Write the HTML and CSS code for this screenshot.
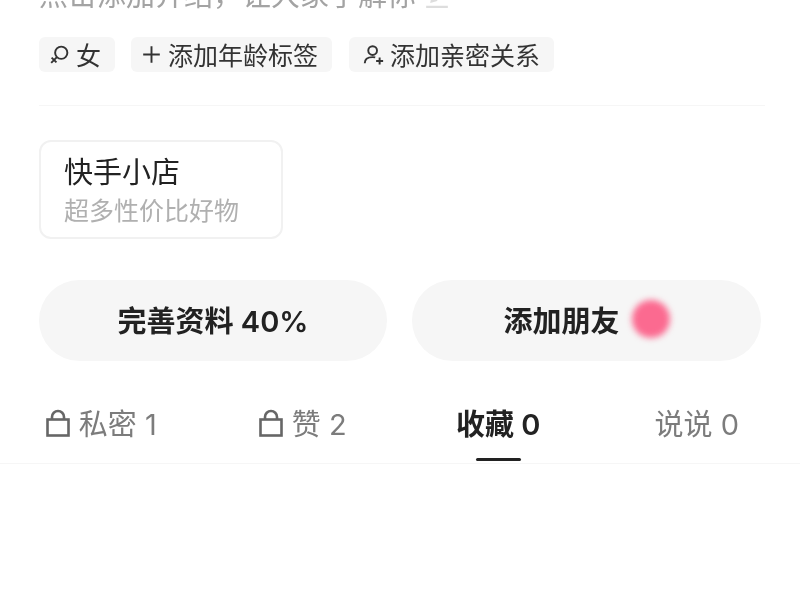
FILE: index.html
```html
<!DOCTYPE html>
<html lang="zh">
<head>
<meta charset="utf-8">
<title>个人主页</title>
<link rel="stylesheet" href="styles.css">
</head>
<body>
<main class="page">
  <section class="profile">
    <p class="intro">点击添加介绍，让大家了解你 <svg class="edit" viewBox="0 0 24 24"><path d="M2 22h20M7 17l1-4L17 4l3 3-9 9z"/></svg></p>
    <div class="tags">
      <span class="tag"><svg class="tag-icon" viewBox="0 0 24 24"><circle cx="14" cy="10" r="7"/><path d="M9 15 2.500 21.500M3 15.500l5.500 5.500"/></svg>女</span>
      <span class="tag"><svg class="tag-icon" viewBox="0 0 24 24"><path d="M12 2.500v19M2.500 12h19"/></svg>添加年龄标签</span>
      <span class="tag tag-wide"><svg class="tag-icon" viewBox="0 0 24 24"><circle cx="11" cy="7.500" r="5"/><path d="M2 22c0-4.500 3.500-7 9-7 1 0 2 .1 3 .3M15 19.500h8M19 15.500v8"/></svg>添加亲密关系</span>
    </div>
  </section>
  <div class="shop">
    <div class="shop-name">快手小店</div>
    <div class="shop-sub">超多性价比好物</div>
  </div>
  <div class="actions">
    <button class="action action-first">完善资料 40%</button>
    <button class="action">添加朋友<span class="dot"></span></button>
  </div>
  <nav class="tabs">
    <div class="tab"><svg class="lock" viewBox="0 0 24 28"><rect x="1.500" y="10.500" width="21" height="16"/><path d="M6 10.500V8a6 6 0 0 1 12 0v2.500"/></svg>私密 1</div>
    <div class="tab tab-shift"><svg class="lock" viewBox="0 0 24 28"><rect x="1.500" y="10.500" width="21" height="16"/><path d="M6 10.500V8a6 6 0 0 1 12 0v2.500"/></svg>赞 2</div>
    <div class="tab active">收藏 0</div>
    <div class="tab">说说 0</div>
  </nav>
</main>
</body>
</html>
```
FILE: styles.css
```css
* { box-sizing: border-box; }
html, body { margin: 0; height: 100%; background: #fff; overflow: hidden; }
body { font-family: Inter, "Noto Sans CJK SC", sans-serif; }
.page { height: 600px; filter: blur(0.7px); overflow: hidden; }
.profile { margin: 0 35px 0 39px; padding-bottom: 33px; border-bottom: 1px solid #f6f6f6; }
.intro { margin: -23px 0 0; height: 45px; font-size: 29px; line-height: 37px; color: #a3a3a3; white-space: nowrap; }
.edit { width: 26px; height: 26px; fill: none; stroke: #ddd; stroke-width: 2; vertical-align: -3px; }
.tags { display: flex; gap: 16px; margin-top: 15px; }
.tag { display: flex; align-items: center; height: 35px; padding: 0 14px 2px 10px; gap: 6px; background: #f6f6f6; border-radius: 6px; font-size: 25px; color: #333; white-space: nowrap; }
.tag-wide { margin-left: 1px; padding-left: 14px; }
.tag-icon { width: 21px; height: 21px; fill: none; stroke: #333; stroke-width: 2.200; margin-top: 2px; }
.shop { width: 244px; height: 99px; margin: 34px 0 0 39px; padding: 12px 23px; border: 2px solid #f1f1f1; border-radius: 12px; }
.shop-name { font-size: 29px; line-height: 38px; color: #222; white-space: nowrap; }
.shop-sub { margin-top: 3px; font-size: 25px; line-height: 33px; color: #b0b0b0; white-space: nowrap; }
.actions { display: flex; gap: 25px; margin: 41px 39px 0; }
.action { display: flex; flex: 1; align-items: center; justify-content: center; gap: 12px; height: 81px; padding: 0 0 3px; border: 0; border-radius: 41px; background: #f6f6f6; font: 600 29px Inter, "Noto Sans CJK SC", sans-serif; color: #222; }
.action-first { flex: 0 0 348px; }
.dot { width: 38px; height: 38px; border-radius: 50%; background: #fb6a90; filter: blur(3px); }
.tabs { display: grid; grid-template-columns: repeat(4, 1fr); height: 81px; margin-top: 22px; padding: 0 4px 0 2px; border-bottom: 1px solid #f6f6f6; }
.tab { position: relative; display: flex; align-items: center; justify-content: center; gap: 9px; height: 78px; font-size: 29px; color: #7c7c7c; white-space: nowrap; }
.tab-shift { padding-left: 6px; }
.tab.active { color: #222; font-weight: 600; }
.tab.active::after { content: ""; position: absolute; left: 50%; bottom: 0; width: 45px; height: 3px; margin-left: -22px; background: #222; border-radius: 2px; }
.lock { width: 24px; height: 28px; margin-top: 2px; fill: none; stroke: #666; stroke-width: 2.600; }
```
